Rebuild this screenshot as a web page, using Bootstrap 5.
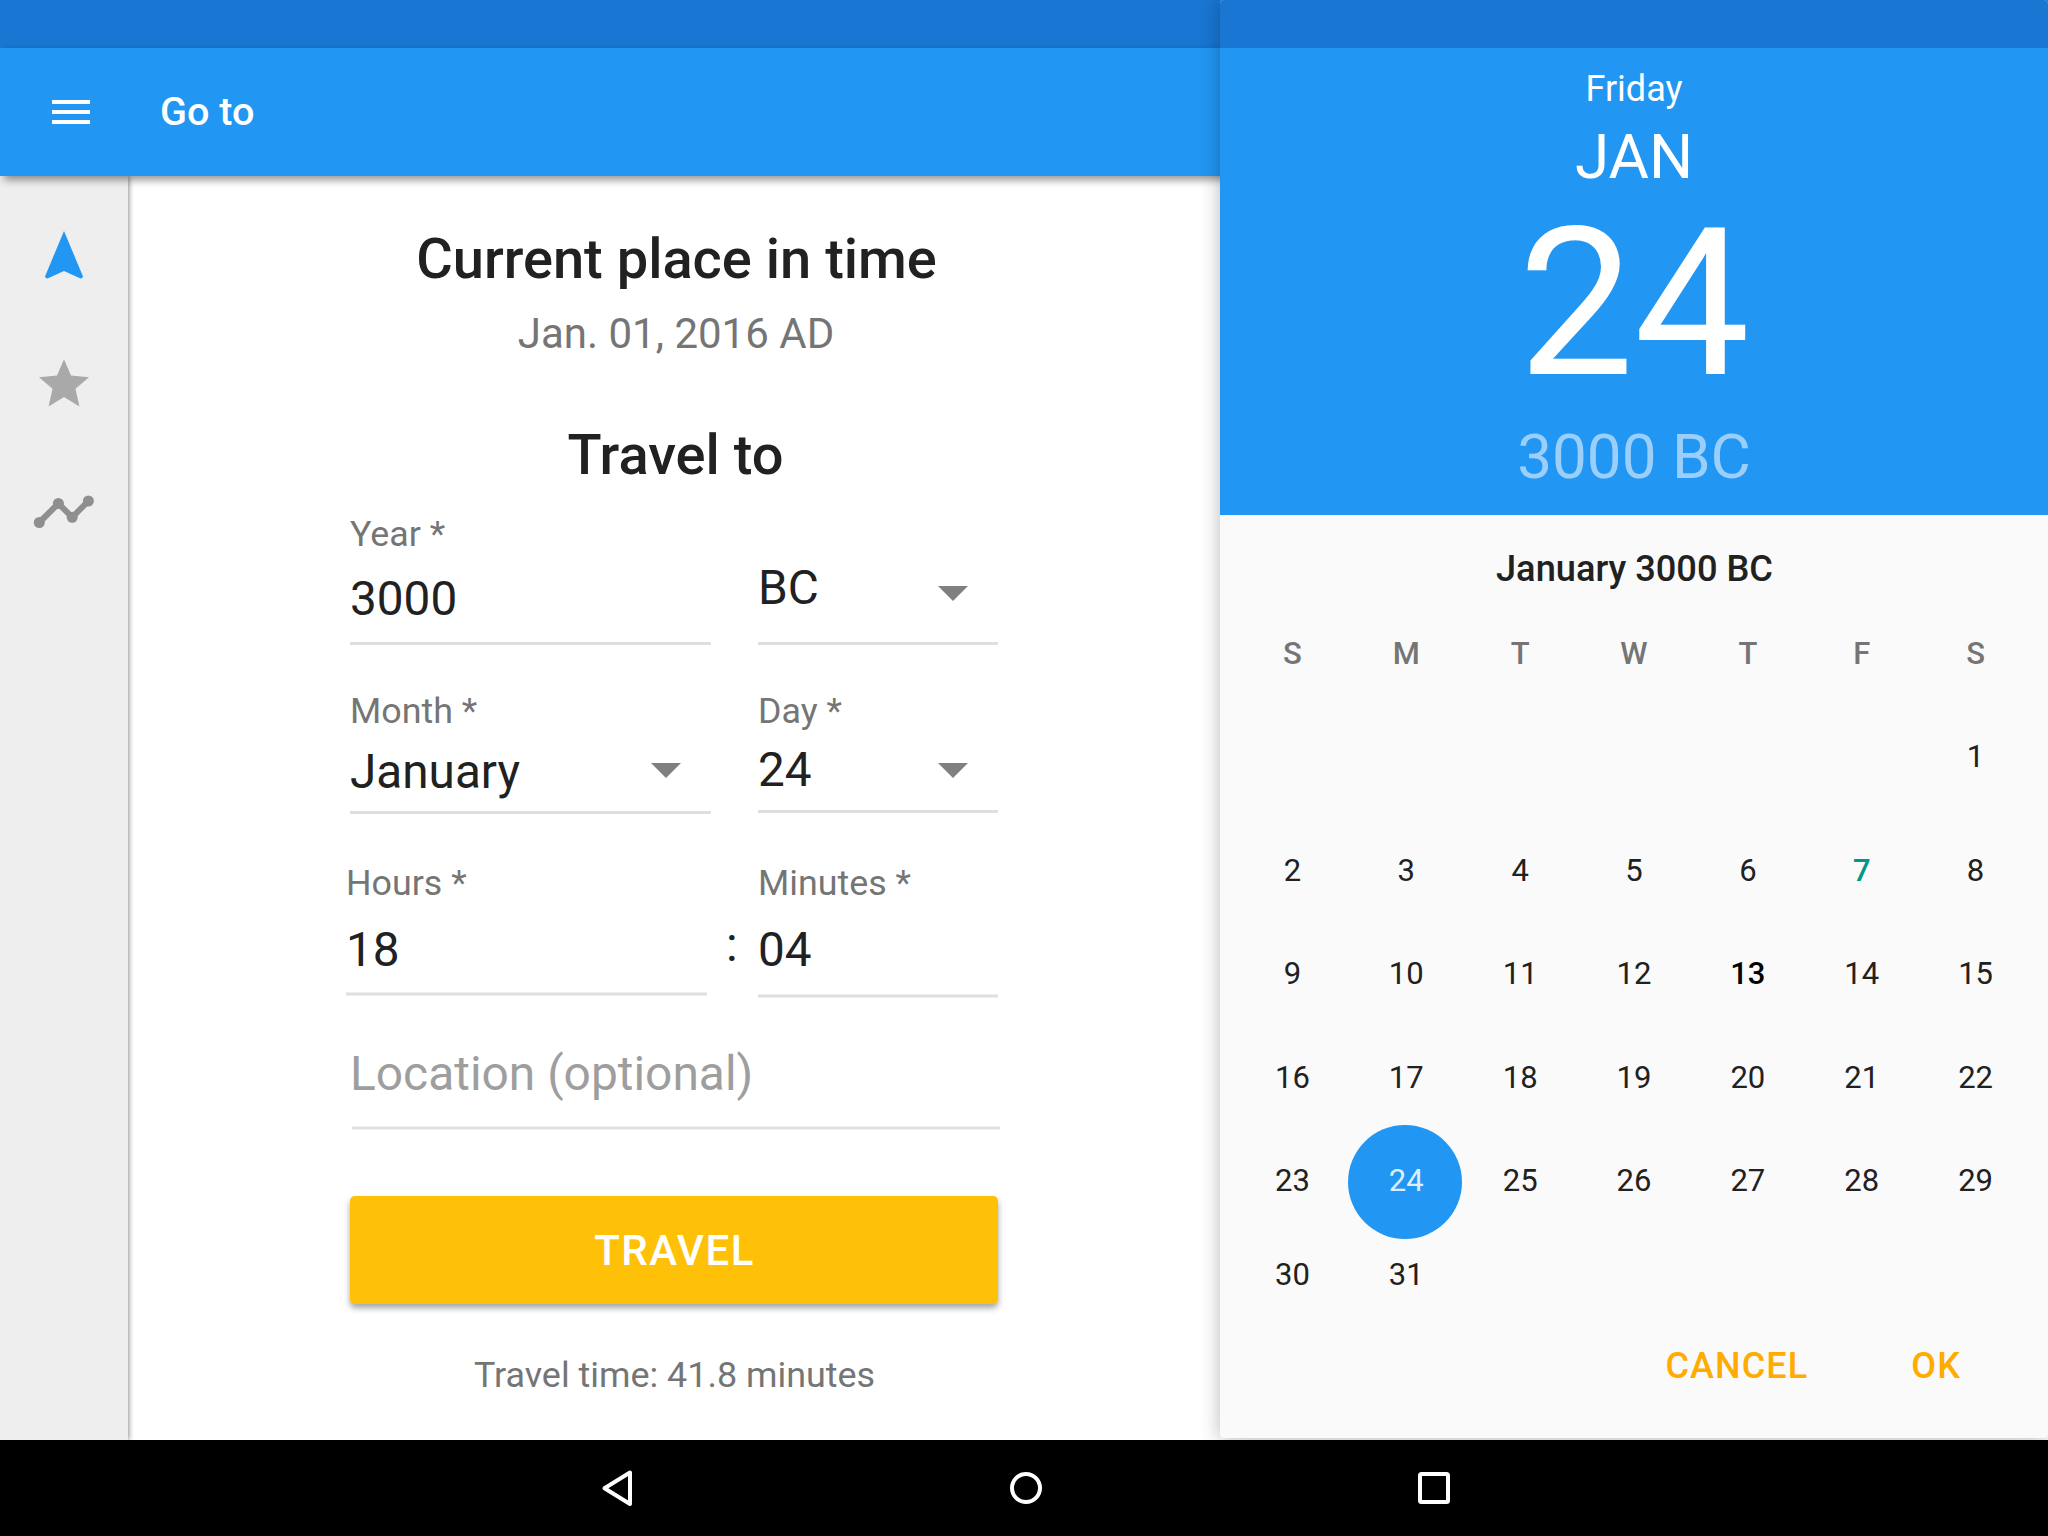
<!DOCTYPE html>
<html lang="en">
<head>
<meta charset="utf-8">
<meta name="viewport" content="width=device-width, initial-scale=1">
<title>Go to</title>
<link href="https://cdn.jsdelivr.net/npm/bootstrap@5.3.0/dist/css/bootstrap.min.css" rel="stylesheet">
<style>
  :root { --blue: #2196f3; --blue-dark: #1976d2; --amber: #ffc107; --ink: #212121; --muted: #757575; --rule: #dfdfdf; }
  body { font-family: Roboto, "Liberation Sans", sans-serif; color: var(--ink); background: #fff; width: 2048px; height: 1536px; overflow: hidden; line-height: 1; }
  .screen { height: 1440px; }
  .status { height: 48px; background: var(--blue-dark); }
  .appbar { height: 128px; background: var(--blue); padding: 0 0 0 52px; z-index: 2; box-shadow: 4px 4px 8px rgba(0,0,0,.42); }
  .appbar .title { font-size: 39.6px; font-weight: 500; line-height: 48px; margin-left: 70px; padding-bottom: 1px; }
  .rail { width: 128px; background: #eee; z-index: 1; box-shadow: 1px 0 5px rgba(0,0,0,.45); }
  .rail svg, .softkeys svg { display: block; }
  .main-pane { width: 1092px; padding-top: 51px; }
  .form-col { width: 648px; }
  .headline { font-size: 56px; line-height: 64px; font-weight: 500; margin: 0; padding-left: 5px; }
  .now { font-size: 42px; line-height: 50px; color: var(--muted); margin: 18px 0 64px; padding-left: 4px; }
  .line { --w: 361px; width: var(--w); border-bottom: 3px solid var(--rule); }
  .line.narrow { --w: 240px; }
  .line.soft { border-bottom: 0; background: linear-gradient(#efefef 0 1px, var(--rule) 1px 3px, #efefef 3px 4px) bottom / 100% 4px no-repeat; padding-bottom: 4px; }
  .line label { font-size: 35.8px; line-height: 40px; color: var(--muted); padding-top: 1px; }
  .val { font-size: 47.7px; line-height: 56px; }
  .row-year { height: 132px; margin-top: 26px; }
  .row-month { height: 124px; margin-top: 45px; }
  .row-time { height: 135px; margin-top: 49px; }
  .row-time label { padding-top: 0; }
  .caret-down { width: 30px; height: 15px; margin-right: 30px; }
  .hours { margin-left: -4px; margin-bottom: 2px; }
  .colon { width: 51px; padding-left: 19px; font-size: 48px; line-height: 56px; margin-bottom: 25px; }
  .place { height: 84px; width: 648px; margin: 48px 0 0 2px; color: #9e9e9e; }
  .place .val { font-size: 47.9px; margin-left: -2px; }
  .travel { height: 108px; width: 648px; margin-top: 66px; background: var(--amber) !important; color: #fff !important; border: 0; border-radius: 5px; font-size: 42px; font-weight: 500; letter-spacing: 1.5px; box-shadow: 0 4px 6px rgba(0,0,0,.36); padding: 1px 0 0 1px; }
  .eta { font-size: 35.9px; line-height: 40px; color: var(--muted); margin-top: 51px; padding-left: 1px; }
  .picker { left: 20px; width: 828px; height: 1438px; background: #fafafa; border-radius: 4px; box-shadow: 0 2px 20px rgba(0,0,0,.28); overflow: hidden; }
  .picker-wrap { left: 1200px; top: 0; width: 848px; height: 1440px; overflow: hidden; z-index: 5; }
  .picker-head { height: 467px; background: var(--blue); color: #fff; }
  .dow { font-size: 36px; line-height: 40px; margin-top: 21px; }
  .mon { font-size: 62px; line-height: 70px; margin-top: 13px; }
  .big { font-size: 206px; line-height: 180px; margin-top: 22px; }
  .yr { font-size: 62px; line-height: 70px; margin-top: 28px; color: rgba(255,255,255,.54); }
  .cal-title { font-size: 36.2px; line-height: 40px; font-weight: 500; margin-top: 34px; padding-left: 1px; }
  .week { display: grid; grid-template-columns: repeat(7, 1fr); margin: 0 15.5px; font-size: 31px; line-height: 40px; text-align: center; }
  .week.names { color: var(--muted); font-weight: 500; margin-top: 45px; }
  .picked { color: rgba(255,255,255,.87); position: relative; z-index: 1; }
  .picked::before { content: ""; position: absolute; z-index: -1; width: 114px; height: 114px; border-radius: 50%; background: var(--blue); left: 50%; top: 50%; transform: translate(-58px, -56px); }
  .today { color: #009688; font-weight: 500; }
  .marked { color: #000; font-weight: 500; }
  .actions { font-size: 36px; line-height: 40px; font-weight: 500; color: #ffab00; letter-spacing: 1.1px; margin-top: 51px; padding-right: 87px; gap: 103px; }
  .softkeys { height: 96px; background: #000; }
</style>
</head>
<body>
<div class="screen d-flex flex-column position-relative">
  <div class="status flex-shrink-0"></div>
  <header class="appbar d-flex align-items-center flex-shrink-0 text-white position-relative">
    <svg width="38" height="24" viewBox="0 0 38 24" fill="#fff"><path d="M0 0h38v4H0zM0 10h38v4H0zM0 20h38v4H0z"/></svg>
    <div class="title">Go to</div>
  </header>
  <div class="d-flex flex-grow-1">
    <nav class="rail position-relative">
      <svg width="128" height="384" viewBox="0 176 128 384">
        <path fill="#2196f3" d="M64 231 45.200 276l-.1 1.200 1.700 1.200 1.200-.2L64 271l16 7.200 1.200 .2 1.700-1.200-.1-1.200z"/>
        <path fill="#a9a9a9" d="M64 359.300 71 375.600 89 377.200 75.500 388.700 79.400 406.500 64 397 48.600 406.500 52.500 388.700 39 377.200 57 375.600z"/>
        <path fill="none" stroke="#8f8f8f" stroke-width="6" d="M39.300 522.500 58.400 503.500 72.200 517.300 88.400 501"/>
        <g fill="#8f8f8f"><circle cx="39.300" cy="522.500" r="5.500"/><circle cx="58.400" cy="503.500" r="5.500"/><circle cx="72.200" cy="517.300" r="5.500"/><circle cx="88.400" cy="501" r="5.500"/></g>
      </svg>
    </nav>
    <main class="main-pane d-flex flex-column align-items-center">
      <div class="form-col d-flex flex-column">
        <h1 class="headline text-center">Current place in time</h1>
        <p class="now text-center">Jan. 01, 2016 AD</p>
        <h2 class="headline text-center" style="padding-left:3px">Travel to</h2>

        <div class="row-year d-flex justify-content-between">
          <div class="line d-flex flex-column justify-content-between">
            <label>Year *</label>
            <div class="val" style="margin-bottom:15px">3000</div>
          </div>
          <div class="line narrow d-flex justify-content-between align-items-end">
            <div class="val" style="margin-bottom:26px">BC</div>
            <svg class="caret-down" style="margin-bottom:41px" viewBox="0 0 30 15"><path fill="#808080" d="M0 0h30L15 15z"/></svg>
          </div>
        </div>

        <div class="row-month d-flex justify-content-between">
          <div class="line d-flex flex-column justify-content-between">
            <label>Month *</label>
            <div class="d-flex justify-content-between align-items-end">
              <div class="val" style="margin-bottom:11px">January</div>
              <svg class="caret-down" style="margin-bottom:33px" viewBox="0 0 30 15"><path fill="#808080" d="M0 0h30L15 15z"/></svg>
            </div>
          </div>
          <div class="line narrow d-flex flex-column justify-content-between" style="margin-bottom:1px">
            <label>Day *</label>
            <div class="d-flex justify-content-between align-items-end">
              <div class="val" style="margin-bottom:12px">24</div>
              <svg class="caret-down" style="margin-bottom:32px" viewBox="0 0 30 15"><path fill="#808080" d="M0 0h30L15 15z"/></svg>
            </div>
          </div>
        </div>

        <div class="row-time d-flex">
          <div class="line soft hours d-flex flex-column justify-content-between">
            <label>Hours *</label>
            <div class="val" style="margin-bottom:14px">18</div>
          </div>
          <div class="colon align-self-end">:</div>
          <div class="line soft narrow d-flex flex-column justify-content-between">
            <label>Minutes *</label>
            <div class="val" style="margin-bottom:16px">04</div>
          </div>
        </div>

        <div class="line soft place"><div class="val">Location (optional)</div></div>
        <button class="btn travel" type="button">TRAVEL</button>
        <div class="eta text-center">Travel time: 41.8 minutes</div>
      </div>
    </main>
  </div>

  <div class="picker-wrap position-absolute">
    <aside class="picker position-relative">
      <div class="status"></div>
      <div class="picker-head text-center d-flex flex-column">
        <div class="dow">Friday</div>
        <div class="mon">JAN</div>
        <div class="big">24</div>
        <div class="yr">3000 BC</div>
      </div>
      <div class="cal-title text-center">January 3000 BC</div>
      <div class="week names"><span>S</span><span>M</span><span>T</span><span>W</span><span>T</span><span>F</span><span>S</span></div>
      <div class="week" style="margin-top:63px"><span style="grid-column:7">1</span></div>
      <div class="week" style="margin-top:74px"><span>2</span><span>3</span><span>4</span><span>5</span><span>6</span><span class="today">7</span><span>8</span></div>
      <div class="week" style="margin-top:63px"><span>9</span><span>10</span><span>11</span><span>12</span><span class="marked">13</span><span>14</span><span>15</span></div>
      <div class="week" style="margin-top:64px"><span>16</span><span>17</span><span>18</span><span>19</span><span>20</span><span>21</span><span>22</span></div>
      <div class="week" style="margin-top:63px"><span>23</span><span class="picked">24</span><span>25</span><span>26</span><span>27</span><span>28</span><span>29</span></div>
      <div class="week" style="margin-top:54px"><span>30</span><span>31</span></div>
      <div class="actions d-flex justify-content-end"><span>CANCEL</span><span>OK</span></div>
    </aside>
  </div>
</div>
<footer class="softkeys">
  <svg width="2048" height="96" viewBox="0 1440 2048 96" fill="none" stroke="#fff" stroke-width="4" stroke-linejoin="round">
    <path d="M630 1472.500v31.500L604.500 1488.200z"/>
    <circle cx="1026" cy="1488" r="14"/>
    <rect x="1420" y="1474" width="28" height="28" rx="1.500"/>
  </svg>
</footer>
<script src="https://cdn.jsdelivr.net/npm/bootstrap@5.3.0/dist/js/bootstrap.bundle.min.js"></script>
</body>
</html>
